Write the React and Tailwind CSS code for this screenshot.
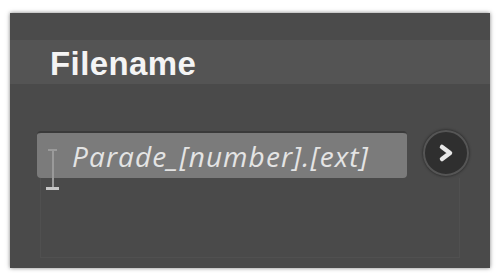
import React from 'react';

const Chevron = () => (
  <svg width="22" height="22" viewBox="0 0 22 22" className="block">
    <path d="M7 5 L15 11 L7 17" fill="none" stroke="#e8e8e8" strokeWidth="4.5" strokeLinecap="round" strokeLinejoin="round" />
  </svg>
);

export default function App() {
  return (
    <div className="w-[498px] h-[273px] bg-white pt-[13px] pl-[10px] pr-[8px] pb-[5px]">
      <div className="relative w-full h-full bg-[#4a4a4a] shadow-[0_0_4px_rgba(0,0,0,0.5)] flex flex-col">
        <div className="h-[27px] bg-[#4b4b4b]" />
        <div className="h-[44px] bg-[#545454] flex items-center pl-[40px]">
          <span
            className="text-[33px] font-bold text-[#f4f4f4] leading-none tracking-[0.4px] mt-[2px]"
            style={{ fontFamily: '"Liberation Sans", Arial, sans-serif' }}
          >
            Filename
          </span>
        </div>
        <div className="flex items-center mt-[47px] pl-[27px] gap-[16px]">
          <div className="relative w-[370px] h-[47px] rounded-[4px] bg-[#7b7b7b] border-t-2 border-[#3a3a3a] flex items-center pl-[35px]">
            <span
              className="text-[28px] italic text-[#e4e4e4] leading-none tracking-[1.1px]"
              style={{ fontFamily: '"Open Sans", sans-serif' }}
            >
              Parade_[number].[ext]
            </span>
            <div className="absolute left-[9px] top-[16px] flex flex-col items-center">
              <div className="w-[9px] h-[2px] bg-[#9a9a9a]" />
              <div className="w-[2px] h-[36px] bg-[#9a9a9a]" />
              <div className="w-[13px] h-[3px] bg-[#c8c8c8]" />
            </div>
          </div>
          <div className="w-[46px] h-[46px] rounded-full bg-[#2f2f2f] border-2 border-[#555] shadow-[0_0_3px_rgba(0,0,0,0.6)] flex items-center justify-center -mt-[4px]">
            <Chevron />
          </div>
        </div>
        <div className="flex-1 mx-[30px] mb-[10px] border-x border-b border-[#505050]" />
      </div>
    </div>
  );
}
